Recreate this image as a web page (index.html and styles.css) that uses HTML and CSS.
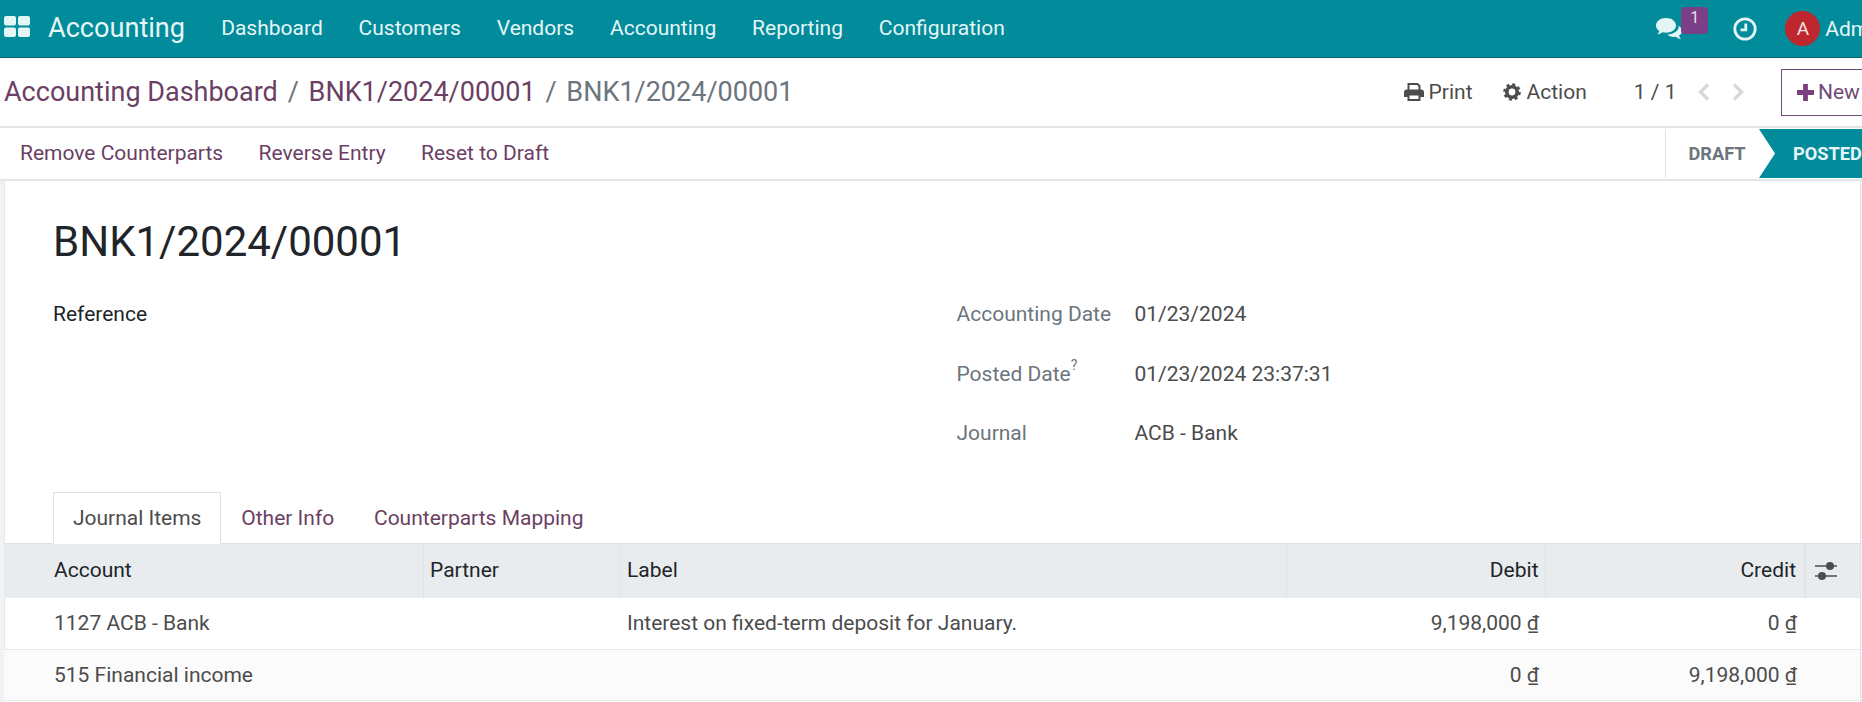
FILE: index.html
```html
<!DOCTYPE html>
<html lang="en">
<head>
<meta charset="utf-8">
<title>BNK1/2024/00001</title>
<link rel="stylesheet" href="styles.css">
</head>
<body>
<header class="navbar">
  <svg class="apps" viewBox="0 0 26 21"><rect x="0" y="0" width="12" height="9.500" rx="2"/><rect x="14" y="0" width="12" height="9.500" rx="2"/><rect x="0" y="11.500" width="12" height="9.500" rx="2"/><rect x="14" y="11.500" width="12" height="9.500" rx="2"/></svg>
  <span class="brand">Accounting</span>
  <nav class="menu">
    <a>Dashboard</a><a>Customers</a><a>Vendors</a><a>Accounting</a><a>Reporting</a><a>Configuration</a>
  </nav>
  <div class="systray">
    <span class="chat">
      <svg class="chat-icon" viewBox="0 0 27 24"><path d="M11 1C5 1 1 4.500 1 8.500c0 2.300 1.300 4.300 3.400 5.600-.4 1.300-1.200 2.400-2.200 3.300 2-.2 3.900-1 5.300-2.100 1.100.3 2.300.4 3.500.4 6 0 10-3.300 10-7.200S17 1 11 1z"/><path d="M23.800 8.800c.2 5-4.500 8.400-11.400 8.600 1.400 1.600 3.700 2.500 6.300 2.500.8 0 1.500-.1 2.200-.2 1.200 1.100 3 2.100 5.100 2.300-1-1-1.700-2-2-3.300 1.900-1.200 3-2.900 3-4.700 0-2-1.200-3.700-3.200-5.200z"/></svg>
      <span class="badge">1</span>
    </span>
    <svg class="clock" viewBox="0 0 24 24"><circle cx="12" cy="12" r="10.200"/><path d="M12.800 6.500v6.300H7.500"/></svg>
    <span class="avatar">A</span>
    <span class="user">Admin</span>
  </div>
</header>

<section class="control">
  <div class="breadcrumb">
    <a>Accounting Dashboard</a><span class="sep">/</span><a>BNK1/2024/00001</a><span class="sep">/</span><span class="current">BNK1/2024/00001</span>
  </div>
  <div class="actions">
    <span class="act act-print"><svg class="ico" viewBox="0 0 20 18"><path d="M4.500 7V1h9l2 2v4" fill="none" stroke="#4c4c4c" stroke-width="2"/><path d="M3 6.500h14a3 3 0 0 1 3 3V14h-4v-3H4v3H0V9.500a3 3 0 0 1 3-3z" fill="#4c4c4c"/><path d="M4.500 11.500h11v5.500h-11z" fill="none" stroke="#4c4c4c" stroke-width="2"/></svg>Print</span>
    <span class="act act-action"><svg class="ico gear" viewBox="0 0 18 18"><circle cx="9" cy="9" r="5.200" fill="none" stroke="#4c4c4c" stroke-width="3.600"/><circle cx="9" cy="9" r="7.600" fill="none" stroke="#4c4c4c" stroke-width="2.400" stroke-dasharray="3.000 2.970"/></svg>Action</span>
    <span class="pager">1 / 1</span>
    <svg class="chev" viewBox="0 0 14 20"><path d="M11 2.500 3.500 10l7.500 7.500" /></svg>
    <svg class="chev" viewBox="0 0 14 20"><path d="M3 2.500 10.500 10 3 17.500" /></svg>
    <button class="new"><svg class="plus" viewBox="0 0 16 16"><path d="M8 0v16M0 8h16"/></svg>New</button>
  </div>
</section>

<section class="statusrow">
  <div class="buttons"><a>Remove Counterparts</a><a>Reverse Entry</a><a>Reset to Draft</a></div>
  <div class="status">
    <span class="draft">DRAFT</span>
    <span class="posted">POSTED</span>
  </div>
</section>

<main class="content">
  <article class="sheet">
    <h1 class="title">BNK1/2024/00001</h1>
    <div class="form">
      <div class="col-left"><label class="ref">Reference</label></div>
      <div class="col-right">
        <span class="lbl">Accounting Date</span><span class="val">01/23/2024</span>
        <span class="lbl">Posted Date<sup>?</sup></span><span class="val">01/23/2024 23:37:31</span>
        <span class="lbl">Journal</span><span class="val">ACB - Bank</span>
      </div>
    </div>
    <div class="tabs">
      <span class="tab active">Journal Items</span><span class="tab">Other Info</span><span class="tab">Counterparts Mapping</span>
    </div>
    <table class="lines">
      <colgroup><col class="c1"><col class="c2"><col class="c3"><col class="c4"><col class="c5"><col class="c6"></colgroup>
      <thead>
        <tr><th class="first">Account</th><th>Partner</th><th>Label</th><th class="num">Debit</th><th class="num cr">Credit</th><th class="opt"><svg class="sliders" viewBox="0 0 22 18"><path d="M0 4h22M0 14h22" stroke-width="1.500"/><circle cx="15" cy="4" r="4"/><circle cx="7" cy="14" r="4"/></svg></th></tr>
      </thead>
      <tbody>
        <tr><td class="first">1127 ACB - Bank</td><td></td><td>Interest on fixed-term deposit for January.</td><td class="num">9,198,000 <u>₫</u></td><td class="num cr">0 <u>₫</u></td><td></td></tr>
        <tr class="alt"><td class="first">515 Financial income</td><td></td><td></td><td class="num">0 <u>₫</u></td><td class="num cr">9,198,000 <u>₫</u></td><td></td></tr>
      </tbody>
    </table>
  </article>
</main>
</body>
</html>
```

FILE: styles.css
```css
* { box-sizing: border-box; }
html, body { margin: 0; height: 100%; overflow: hidden; }
body { font-family: Roboto, "Noto Sans", sans-serif; font-size: 21px; color: #4c4c4c; background: #fff; width: 1862px; }

.navbar { height: 58px; background: #018b9b; border-bottom: 1px solid #0b5f66; display: flex; align-items: center; color: #e6f6f7; padding-left: 4px; }
.apps { width: 26px; height: 21px; fill: #e4f5f6; margin-top: -4px; flex: none; }
.brand { font-size: 27.100px; margin: -2px 0 0 18px; }
.menu { display: flex; margin: -2px 0 0 18.200px; }
.menu a { padding: 0 17.950px; }
.systray { margin-left: auto; margin-right: -24px; display: flex; align-items: center; flex: none; }
.chat { position: relative; width: 52px; height: 34px; display: block; }
.chat-icon { position: absolute; left: 0; top: 5px; width: 27px; height: 24px; fill: #e4f5f6; }
.badge { position: absolute; left: 26px; top: -5px; width: 27px; height: 27px; background: #7a3f86; border-radius: 4px; color: #e6e0ea; font-size: 16px; text-align: center; line-height: 21px; }
.clock { width: 24px; height: 24px; margin-left: 26px; fill: none; stroke: #e4f5f6; stroke-width: 2.800; flex: none; }
.avatar { width: 35px; height: 35px; border-radius: 50%; background: #bf272e; color: #f4e3e4; margin-left: 28px; display: flex; align-items: center; justify-content: center; font-size: 19px; flex: none; }
.user { margin-left: 5px; }

.control { height: 70px; border-bottom: 2px solid #e3e5e7; display: flex; align-items: center; justify-content: space-between; padding-left: 4px; }
.breadcrumb { font-size: 27px; display: flex; }
.breadcrumb a { color: #6b3f63; }
.sep { color: #6c757d; margin: 0 9.800px; }
.current { color: #6c757d; }
.actions { display: flex; align-items: center; margin-right: -40px; }
.act { display: flex; align-items: center; }
.act-action { margin-left: 30px; }
.ico { width: 20px; height: 18px; margin-right: 5px; flex: none; }
.act-action .ico { margin-right: 6px; }
.gear { width: 18px; }
.pager { margin-left: 47px; color: #4c4c4c; }
.chev { width: 14px; height: 20px; fill: none; stroke: #d6d9dc; stroke-width: 3.400; flex: none; margin-left: 20.500px; }
.chev + .chev { margin-left: 20px; }
.new { margin-left: 36px; width: 121px; height: 47px; border: 1px solid #714b78; background: #fff; color: #714b78; font: inherit; display: flex; align-items: center; padding: 0 0 0 15px; }
.plus { width: 17px; height: 17px; fill: none; stroke: #7b3f80; stroke-width: 4.500; margin-right: 4px; flex: none; }

.statusrow { height: 53px; display: flex; justify-content: space-between; border-bottom: 2px solid #e3e5e7; padding-left: 20px; align-items: stretch; }
.buttons { display: flex; align-items: center; gap: 35.400px; color: #6b3f63; padding-bottom: 2px; }
.status { display: flex; align-items: stretch; margin: 1px 0 0; height: 49px; width: 197px; flex: none; }
.draft { width: 94px; border-left: 1px solid #dee2e6; display: flex; align-items: center; padding-left: 22.500px; font-size: 18.200px; font-weight: 700; color: #6c757d; }
.posted { width: 103px; background: #018b9b; color: #e6f6f7; font-size: 18.200px; font-weight: 700; display: flex; align-items: center; padding-left: 34px; white-space: nowrap; overflow: hidden; clip-path: polygon(0 0, 100% 0, 100% 100%, 0 100%, 16px 50%); }

.content { background: #f1f2f3; height: 521px; padding: 0 1px 0 4px; overflow: hidden; }
.sheet { background: #fff; height: 100%; border-left: 1px solid #e3e5e7; border-right: 1px solid #e3e5e7; }
.title { margin: 0; font-size: 42px; font-weight: 400; color: #212529; line-height: 47px; padding: 37px 0 0 48px; }
.form { display: flex; padding-top: 19.500px; height: 233px; align-items: flex-start; }
.col-left { width: 951.500px; padding-left: 48px; }
.ref { line-height: 59.500px; color: #212529; }
.col-right { display: grid; grid-template-columns: 178px auto; grid-auto-rows: 59.500px; align-items: center; }
.lbl { color: #6c757d; }
.lbl sup { font-size: 14px; line-height: 0; vertical-align: 11px; }
.tabs { display: flex; padding-left: 48px; height: 51px; margin-top: -6px; }
.tab { display: flex; align-items: center; padding: 0 18.900px; color: #6b3f63; border: 1px solid transparent; }
.tab.active { color: #4c4c4c; background: #fff; border-color: #dee2e6; border-bottom-color: #fff; margin-bottom: -1px; position: relative; }
.lines { border-collapse: collapse; table-layout: fixed; width: 1856px; margin-left: -1px; }
.c1 { width: 419px; } .c2 { width: 197px; } .c3 { width: 666px; } .c4 { width: 259px; } .c5 { width: 260px; } .c6 { width: 55px; }
.lines th { background: #e9ecef; height: 54px; font-weight: 400; color: #212529; text-align: left; padding: 0 6.500px 2px; border-top: 1px solid #dee2e6; border-left: 1px solid #dfe3e6; }
.lines th.first { border-left: 0; padding-left: 50px; }
.lines td { height: 51.500px; padding: 0 8px 0 7px; border-bottom: 1px solid #e6e8ea; }
.lines td.first { padding-left: 50px; }
.lines .num, .lines th.num { text-align: right; padding-right: 6px; }
.lines .num.cr, .lines th.num.cr { padding-right: 8px; }
.lines .alt td { background: #fbfbfb; }
.lines th.opt { padding: 0 0 0 9px; border-left: 2px solid #dfe3e6; }
.sliders { width: 22px; height: 18px; display: block; fill: #4c4c4c; stroke: #4c4c4c; stroke-width: 0; }
.sliders path { fill: none; stroke: #4c4c4c; }
```
